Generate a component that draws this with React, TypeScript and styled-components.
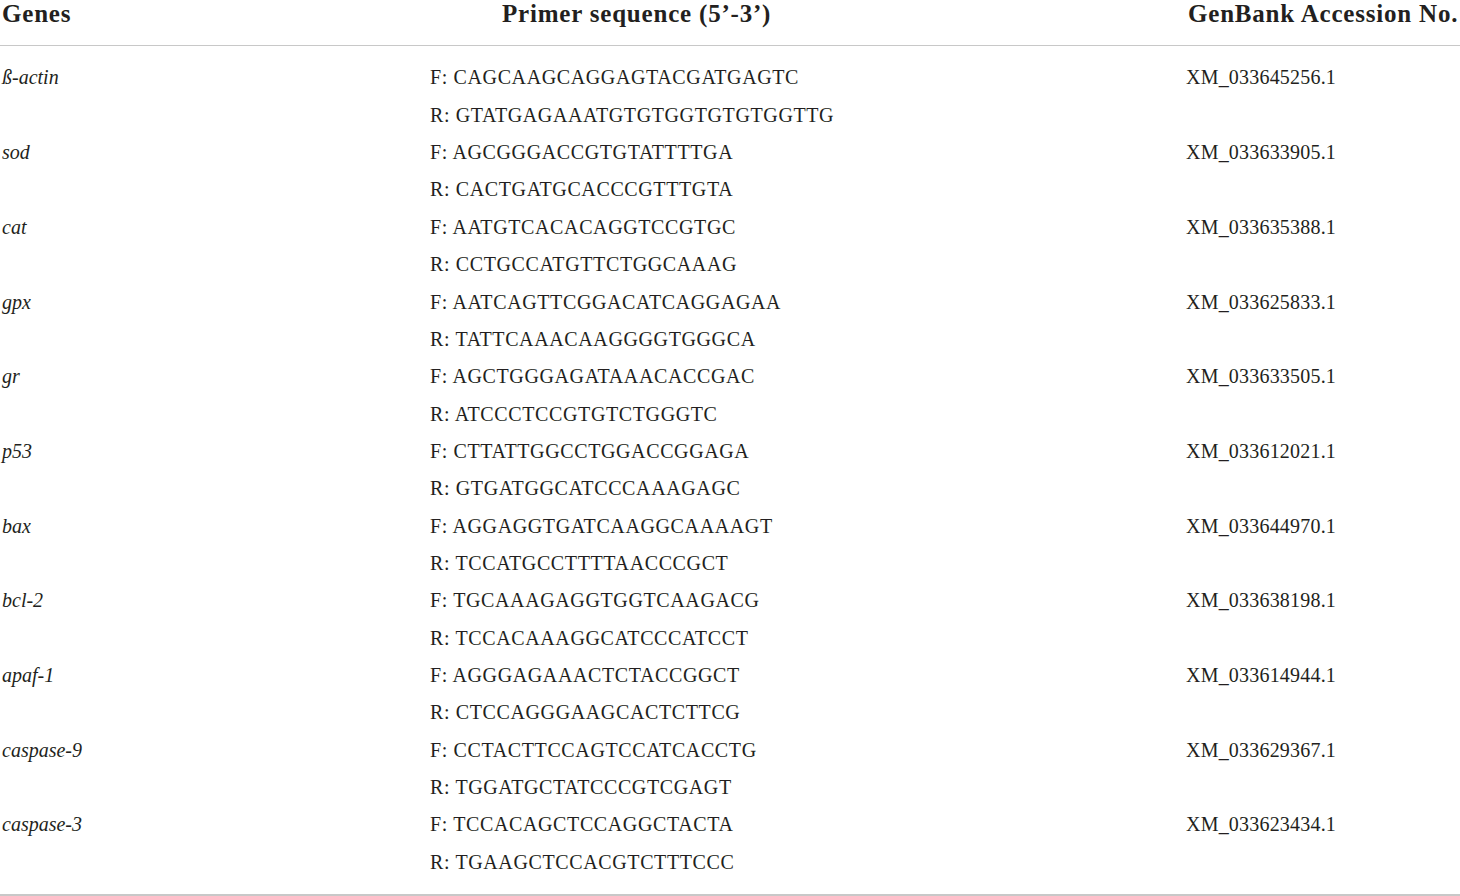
import styled, { createGlobalStyle } from "styled-components"

type PrimerRow = {
    gene: string
    forward: string
    reverse: string
    accession: string
}

const rows: PrimerRow[] = [
    { gene: "ß-actin", forward: "CAGCAAGCAGGAGTACGATGAGTC", reverse: "GTATGAGAAATGTGTGGTGTGTGGTTG", accession: "XM_033645256.1" },
    { gene: "sod", forward: "AGCGGGACCGTGTATTTTGA", reverse: "CACTGATGCACCCGTTTGTA", accession: "XM_033633905.1" },
    { gene: "cat", forward: "AATGTCACACAGGTCCGTGC", reverse: "CCTGCCATGTTCTGGCAAAG", accession: "XM_033635388.1" },
    { gene: "gpx", forward: "AATCAGTTCGGACATCAGGAGAA", reverse: "TATTCAAACAAGGGGTGGGCA", accession: "XM_033625833.1" },
    { gene: "gr", forward: "AGCTGGGAGATAAACACCGAC", reverse: "ATCCCTCCGTGTCTGGGTC", accession: "XM_033633505.1" },
    { gene: "p53", forward: "CTTATTGGCCTGGACCGGAGA", reverse: "GTGATGGCATCCCAAAGAGC", accession: "XM_033612021.1" },
    { gene: "bax", forward: "AGGAGGTGATCAAGGCAAAAGT", reverse: "TCCATGCCTTTTAACCCGCT", accession: "XM_033644970.1" },
    { gene: "bcl-2", forward: "TGCAAAGAGGTGGTCAAGACG", reverse: "TCCACAAAGGCATCCCATCCT", accession: "XM_033638198.1" },
    { gene: "apaf-1", forward: "AGGGAGAAACTCTACCGGCT", reverse: "CTCCAGGGAAGCACTCTTCG", accession: "XM_033614944.1" },
    { gene: "caspase-9", forward: "CCTACTTCCAGTCCATCACCTG", reverse: "TGGATGCTATCCCGTCGAGT", accession: "XM_033629367.1" },
    { gene: "caspase-3", forward: "TCCACAGCTCCAGGCTACTA", reverse: "TGAAGCTCCACGTCTTTCCC", accession: "XM_033623434.1" },
]

const App: React.FC = () => {
    return (
        <>
            <GlobalStyle />
            <Table>
                <HeaderRow>
                    <HeadCell>Genes</HeadCell>
                    <HeadCell $indent={70}>Primer sequence (5’-3’)</HeadCell>
                    <HeadCell>GenBank Accession No.</HeadCell>
                </HeaderRow>
                <Body>
                    {rows.map(row => (
                        <GeneRow key={row.gene}>
                            <GeneName>{row.gene}</GeneName>
                            <Sequences>
                                <Sequence>F: {row.forward}</Sequence>
                                <Sequence>R: {row.reverse}</Sequence>
                            </Sequences>
                            <Accession>{row.accession}</Accession>
                        </GeneRow>
                    ))}
                </Body>
            </Table>
        </>
    )
}

export default App

const GlobalStyle = createGlobalStyle`
 body {
    margin: 0;
    background: #ffffff;
 }
`

const Table = styled.div`
 width: 1460px;
 height: 896px;
 display: flex;
 flex-direction: column;
 font-family: "Liberation Serif", "Times New Roman", serif;
 color: #231f20;
 overflow: hidden;
`

const columns = `
 display: grid;
 grid-template-columns: 430px 756px 1fr;
`

const HeaderRow = styled.div`
 ${columns}
 height: 45px;
 padding-top: 1px;
 border-bottom: 1px solid #c8c8c8;
`

const HeadCell = styled.div<{ $indent?: number }>`
 padding-left: ${p => (p.$indent ?? 0) + 2}px;
 font-size: 25px;
 font-weight: bold;
 line-height: 26px;
 letter-spacing: 0.8px;
 white-space: nowrap;
`

const Body = styled.div`
 display: flex;
 flex-direction: column;
 padding: 13px 0 13px;
 border-bottom: 2px solid #c8c8c8;
`

const GeneRow = styled.div`
 ${columns}
 font-size: 20px;
 line-height: 37.35px;
`

const GeneName = styled.div`
 padding-left: 2px;
 font-style: italic;
`

const Sequences = styled.div`
 display: flex;
 flex-direction: column;
`

const Sequence = styled.div`
 white-space: nowrap;
 letter-spacing: 0.62px;
`

const Accession = styled.div`
 white-space: nowrap;
 letter-spacing: 0.2px;
`
